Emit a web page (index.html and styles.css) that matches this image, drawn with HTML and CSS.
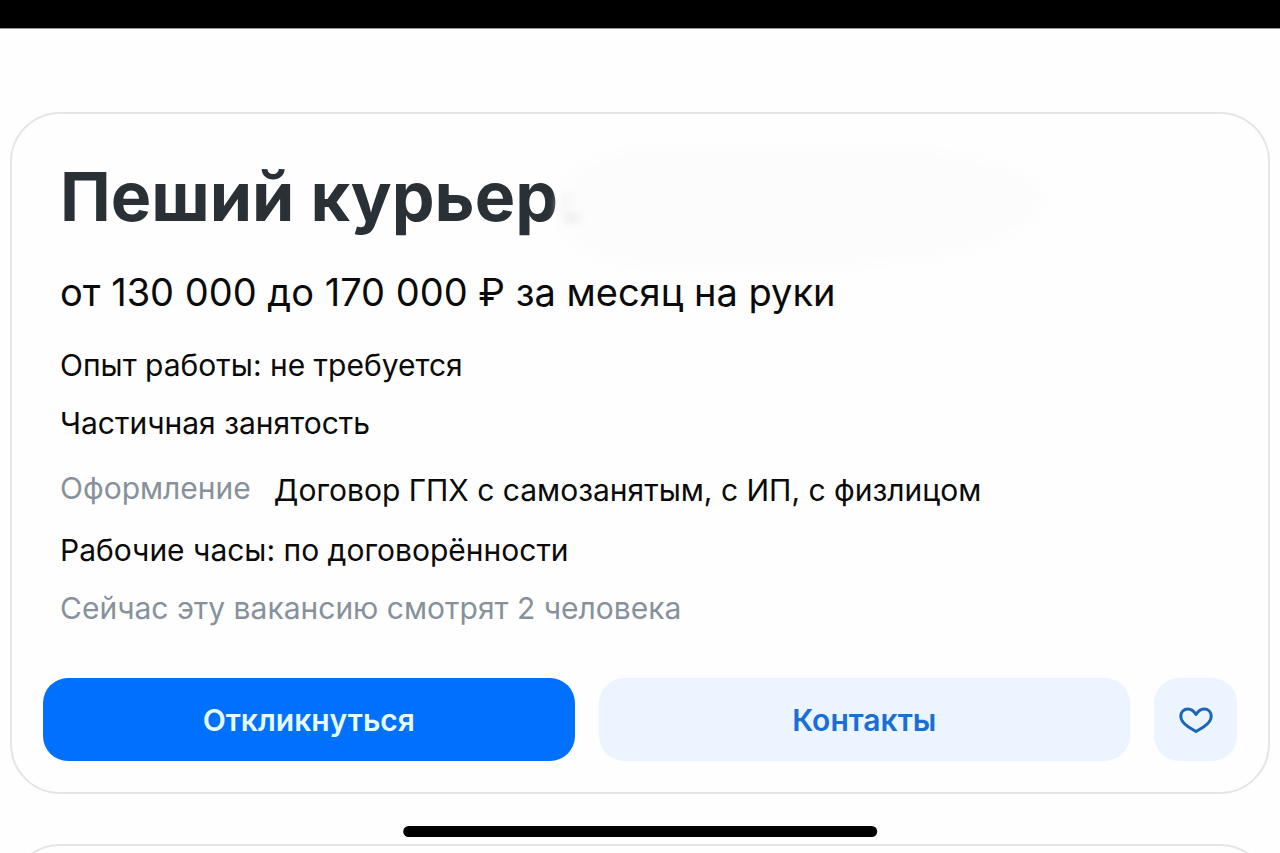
FILE: index.html
```html
<!DOCTYPE html>
<html lang="ru">
<head>
    <meta charset="UTF-8">
    <meta name="viewport" content="width=device-width, initial-scale=1.0">
    <title>Пеший курьер</title>
    <link rel="stylesheet" href="styles.css">
</head>
<body>
    <div class="top-bar"></div>

    <main class="vacancy-list">
        <article class="vacancy-card">
            <div class="vacancy-info">
                <h1 class="vacancy-title">Пеший курьер<span class="smudge"></span></h1>
                <p class="salary">от 130 000 до 170 000 ₽ за месяц на руки</p>
                <p class="info-row">Опыт работы: не требуется</p>
                <p class="info-row">Частичная занятость</p>
                <dl class="contract">
                    <dt>Оформление</dt>
                    <dd>Договор ГПХ с самозанятым, с ИП, с физлицом</dd>
                </dl>
                <p class="info-row">Рабочие часы: по договорённости</p>
                <p class="info-row muted">Сейчас эту вакансию смотрят 2 человека</p>
            </div>
            <div class="actions">
                <button type="button" class="btn btn-primary">Откликнуться</button>
                <button type="button" class="btn btn-secondary">Контакты</button>
                <button type="button" class="btn btn-like" aria-label="В избранное">
                    <svg width="36" height="28" viewBox="0 0 36 28" fill="none" stroke="currentColor" stroke-width="3" stroke-linejoin="round">
                        <path d="M18 8.500C15.500 4.500 13 3 10 3C5.800 3 2.800 6 2.800 10.200C2.800 14.500 6 18 10.500 21L18 25.500L25.500 21C30 18 33.200 14.500 33.200 10.200C33.200 6 30.200 3 26 3C23 3 20.500 4.500 18 8.500Z"/>
                    </svg>
                </button>
            </div>
        </article>

        <article class="vacancy-card next-card"></article>
    </main>

    <div class="home-indicator"></div>
</body>
</html>
```
FILE: styles.css
```css
* {
    box-sizing: border-box;
}

body {
    margin: 0;
    height: 100vh;
    display: flex;
    flex-direction: column;
    overflow: hidden;
    background: #fefefe;
    color: #0a0a0a;
    font-family: Inter, "Noto Sans", sans-serif;
}

h1, p, dl, dd {
    margin: 0;
}

.top-bar {
    flex: none;
    height: 29px;
    background: #000;
    border-bottom: 1px solid #999;
}

.vacancy-list {
    flex: 1;
    min-height: 0;
    overflow: hidden;
    padding: 83px 10px 0;
}

.vacancy-card {
    padding: 42px 31px 31px;
    border: 2px solid #e3e5e8;
    border-radius: 50px;
    background: #fefefe;
}

.next-card {
    min-height: 200px;
    margin-top: 50px;
}

.vacancy-info {
    padding: 0 17px;
}

.vacancy-title {
    font-size: 68px;
    line-height: 80px;
    font-weight: 700;
    color: #293036;
}

/* erased part of the title */
.smudge {
    position: relative;
}

.smudge::after {
    content: "";
    position: absolute;
    top: -8px;
    left: 0;
    width: 484px;
    height: 118px;
    border-radius: 100px 180px 200px 80px / 60px 50px 68px 50px;
    background:
        radial-gradient(ellipse 12px 5px at 14px 71px, #dcdcdc, transparent),
        radial-gradient(ellipse 5px 16px at 8px 54px, #f0f0f0, transparent),
        #fcfcfc;
    filter: blur(4px);
}

.salary {
    margin: 32px 0 31px;
    font-size: 38px;
    line-height: 48px;
}

.info-row {
    margin-top: 22px;
    font-size: 30px;
    line-height: 36px;
}

.contract {
    display: flex;
    gap: 23px;
    margin: 31px 0 24px;
    font-size: 30px;
    line-height: 36px;
}

.contract dt {
    line-height: 32px;
    color: #87919b;
}

.muted {
    color: #87919b;
}

.actions {
    display: flex;
    gap: 24px;
    margin-top: 52px;
}

.btn {
    flex: 1;
    height: 83px;
    padding: 0;
    border: none;
    border-radius: 25px;
    font-family: inherit;
    font-size: 30px;
    font-weight: 600;
    cursor: pointer;
}

.btn-primary {
    background: #0070ff;
    color: #e6fbff;
}

.btn-secondary,
.btn-like {
    background: #ebf4ff;
    color: #1a6fd4;
}

.btn-like {
    flex: 0 0 83px;
    display: flex;
    align-items: center;
    justify-content: center;
    color: #1b66b8;
}

.home-indicator {
    position: absolute;
    bottom: 16px;
    left: 50%;
    width: 37%;
    height: 11px;
    border-radius: 6px;
    background: #000;
    transform: translateX(-50%);
}
```
